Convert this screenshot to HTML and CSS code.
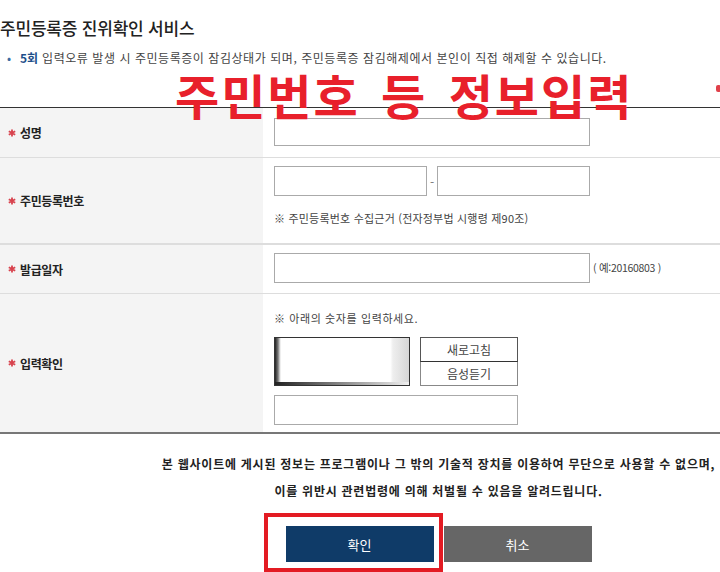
FILE: index.html
```html
<!DOCTYPE html>
<html lang="ko">
<head>
<meta charset="utf-8">
<title>주민등록증 진위확인 서비스</title>
<link rel="stylesheet" href="styles.css">
</head>
<body>
<div class="page">
  <h1 class="title">주민등록증 진위확인 서비스</h1>
  <p class="info"><span class="dot">•</span><strong>5회</strong> 입력오류 발생 시 주민등록증이 잠김상태가 되며, 주민등록증 잠김해제에서 본인이 직접 해제할 수 있습니다.</p>

  <div class="overlay">주민번호 등 정보입력</div>
  <div class="edge-mark"></div>

  <div class="form">
    <div class="row row-name">
      <div class="label"><svg class="req" viewBox="0 0 8 8"><path d="M4 0.5V7.5M0.8 2.2L7.2 5.8M0.8 5.8L7.2 2.2"/></svg>성명</div>
      <div class="field">
        <input class="inp w316" type="text">
      </div>
    </div>
    <div class="row row-rrn">
      <div class="label"><svg class="req" viewBox="0 0 8 8"><path d="M4 0.5V7.5M0.8 2.2L7.2 5.8M0.8 5.8L7.2 2.2"/></svg>주민등록번호</div>
      <div class="field">
        <div class="pair">
          <input class="inp w153" type="text"><span class="dash">-</span><input class="inp w153" type="password">
        </div>
        <p class="note">※ 주민등록번호 수집근거 (전자정부법 시행령 제90조)</p>
      </div>
    </div>
    <div class="row row-date">
      <div class="label"><svg class="req" viewBox="0 0 8 8"><path d="M4 0.5V7.5M0.8 2.2L7.2 5.8M0.8 5.8L7.2 2.2"/></svg>발급일자</div>
      <div class="field inline">
        <input class="inp w316" type="text"><span class="ex">( 예:20160803 )</span>
      </div>
    </div>
    <div class="row row-cap">
      <div class="label"><svg class="req" viewBox="0 0 8 8"><path d="M4 0.5V7.5M0.8 2.2L7.2 5.8M0.8 5.8L7.2 2.2"/></svg>입력확인</div>
      <div class="field">
        <p class="note note-cap">※ 아래의 숫자를 입력하세요.</p>
        <div class="cap-line">
          <div class="captcha"></div>
          <div class="cap-btns">
            <button class="cbtn" type="button">새로고침</button>
            <button class="cbtn" type="button">음성듣기</button>
          </div>
        </div>
        <input class="inp w244" type="text">
      </div>
    </div>
  </div>

  <div class="notice">
    <p>본 웹사이트에 게시된 정보는 프로그램이나 그 밖의 기술적 장치를 이용하여 무단으로 사용할 수 없으며,</p>
    <p>이를 위반시 관련법령에 의해 처벌될 수 있음을 알려드립니다.</p>
  </div>

  <div class="actions">
    <span class="ok-wrap"><button class="btn ok" type="button">확인</button><span class="highlight"></span></span>
    <button class="btn cancel" type="button">취소</button>
  </div>
</div>
</body>
</html>
```

FILE: styles.css
```css
* { box-sizing: border-box; }

html, body {
  margin: 0;
  padding: 0;
  background: #fff;
  overflow: hidden;
}

body {
  width: 720px;
  height: 572px;
  font-family: "Noto Sans CJK KR", "Noto Sans", "DejaVu Sans", sans-serif;
  color: #333;
}

.page {
  position: relative;
  width: 877px;
}

.title {
  margin: 0;
  padding-top: 18px;
  font-size: 17px;
  line-height: 20px;
  font-weight: 500;
  letter-spacing: -0.2px;
  color: #222;
}

.info {
  margin: 12px 0 0;
  padding-left: 7px;
  font-size: 12px;
  line-height: 16px;
  color: #444;
  letter-spacing: 0.55px;
}

.info .dot {
  display: inline-block;
  width: 13px;
  color: #3b6aa0;
}

.info strong {
  color: #1d4f8a;
  font-weight: 700;
  letter-spacing: 0;
}

.overlay {
  position: absolute;
  left: 175px;
  top: 70px;
  z-index: 5;
  font-size: 48px;
  line-height: 48px;
  font-weight: 700;
  letter-spacing: 2px;
  word-spacing: 6px;
  color: #e8202b;
  white-space: nowrap;
}

.edge-mark {
  position: absolute;
  left: 716px;
  top: 85px;
  width: 5px;
  height: 7px;
  background: #e0404a;
  border-radius: 2px;
}

.form {
  margin-top: 41px;
  width: 877px;
  border-top: 1px solid #333;
  border-bottom: 2px solid #777;
}

.row {
  display: flex;
  border-bottom: 1px solid #ddd;
}

.row:last-child { border-bottom: 0; }

.row-rrn { border-bottom-width: 2px; }

.label {
  width: 263px;
  flex: none;
  background: #f4f4f4;
  display: flex;
  align-items: center;
  padding-left: 8px;
  font-size: 12px;
  font-weight: 700;
  color: #222;
  letter-spacing: -0.4px;
}

.req {
  width: 8px;
  height: 8px;
  margin-right: 4px;
  stroke: #d8434e;
  stroke-width: 1.8;
  fill: none;
}

.field {
  padding-left: 11px;
  flex: 1;
}

.row-name { height: 50px; }
.row-name .field { padding-top: 10px; }

.row-rrn { height: 87px; }
.row-rrn .field { padding-top: 8px; }

.row-date { height: 49px; }
.row-date .field { padding-top: 8px; }

.row-cap { height: 138px; }
.row-cap .field { padding-top: 16px; }

.inp {
  display: block;
  height: 30px;
  border: 1px solid #aaa;
  background: #fff;
  margin: 0;
  padding: 0 6px;
  font-family: inherit;
  font-size: 12px;
}

.row-name .inp { height: 28px; }

.w316 { width: 316px; }
.w153 { width: 153px; }
.w244 { width: 244px; }

.pair {
  display: flex;
  align-items: center;
}

.dash {
  width: 10px;
  text-align: center;
  font-size: 12px;
  color: #777;
}

.note {
  margin: 0;
  font-size: 11px;
  line-height: 16px;
  color: #444;
  letter-spacing: 0.2px;
}

.note-cap { letter-spacing: 0.6px; }

.row-rrn .note { margin-top: 14px; }

.inline {
  display: flex;
  align-items: flex-start;
}

.ex {
  margin-left: 3px;
  font-size: 10.5px;
  line-height: 30px;
  color: #444;
  letter-spacing: -0.3px;
}

.cap-line {
  display: flex;
  margin-top: 11px;
  margin-bottom: 9px;
}

.captcha {
  width: 136px;
  height: 49px;
  border: 1px solid #333;
  background:
    linear-gradient(to right, #222, #f0f0f0) bottom / 100% 3px no-repeat,
    linear-gradient(to right, #222 0, #777 3px, #ddd 5px, #fff 6px, #fff 86%, #eee 88%, #d6d6d6 100%);
}

.cap-btns {
  margin-left: 10px;
  width: 98px;
  display: flex;
  flex-direction: column;
}

.cbtn {
  height: 25px;
  width: 98px;
  margin: 0;
  padding: 0;
  border: 1px solid #555;
  background: #fff;
  font-family: inherit;
  font-size: 12px;
  color: #444;
}

.cbtn + .cbtn {
  height: 24px;
  border-top: 0;
  border-color: #555 #888 #888 #888;
}

.cbtn:first-child {
  border-bottom: 1px solid #333;
}

.notice {
  margin-top: 16px;
  text-align: center;
  font-size: 12px;
  line-height: 27px;
  font-weight: 700;
  color: #222;
  letter-spacing: 0.75px;
}

.notice p { margin: 0; }

.actions {
  margin-top: 22px;
  display: flex;
  justify-content: center;
  gap: 10px;
}

.ok-wrap {
  position: relative;
  display: block;
}

.btn {
  display: block;
  width: 148px;
  height: 36px;
  margin: 0;
  border: 0;
  font-family: inherit;
  font-size: 13px;
  color: #fff;
}

.ok { background: #0f3b68; }
.cancel { background: #666; }

.highlight {
  position: absolute;
  left: -22px;
  right: -9px;
  top: -13px;
  bottom: -10px;
  border: 4px solid #e31b23;
}
```
